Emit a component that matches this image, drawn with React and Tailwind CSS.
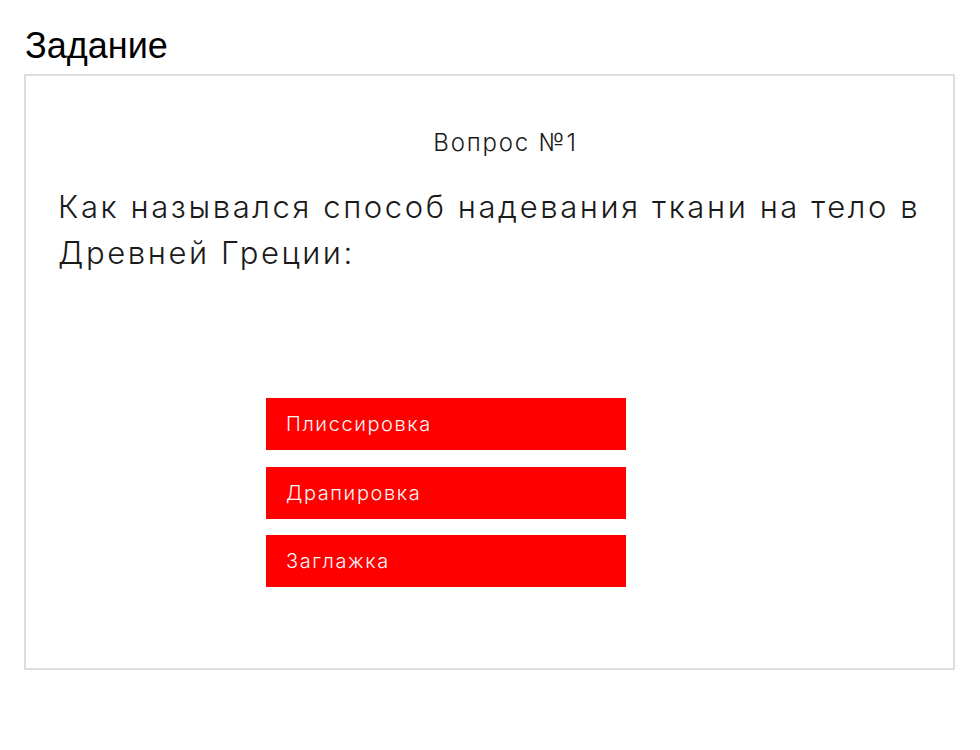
const answers = ['Плиссировка', 'Драпировка', 'Заглажка'];

export default function App() {
    return (
        <div className="min-h-[750px] w-[980px] bg-white pt-[26px] pl-[24px]">
            <h1 className="pl-px text-[36px] leading-[40px] text-black font-['Liberation_Sans',Arial,sans-serif]">
                Задание
            </h1>
            <div className="mt-[8px] h-[596px] w-[931px] border-2 border-[#dcdcdc] pl-[32px] pt-[50px] font-['Inter','Noto_Sans',sans-serif] text-[#1a1a1a]">
                <p className="text-center text-[24px] font-light leading-[34px] tracking-[1.8px]">Вопрос №1</p>
                <p className="mt-[24px] pr-[16px] text-[31px] font-light leading-[46px] tracking-[2.6px]">
                    Как назывался способ надевания ткани на тело в Древней Греции:
                </p>
                <div className="mt-[122px] ml-[208px] flex w-[360px] flex-col gap-[16.5px]">
                    {answers.map((answer) => (
                        <button
                            key={answer}
                            type="button"
                            className="flex h-[52px] items-center bg-[#ff0000] px-[20px] text-left text-[20px] font-light tracking-[1.6px] text-[#f6f6f6]"
                        >
                            {answer}
                        </button>
                    ))}
                </div>
            </div>
        </div>
    );
}
